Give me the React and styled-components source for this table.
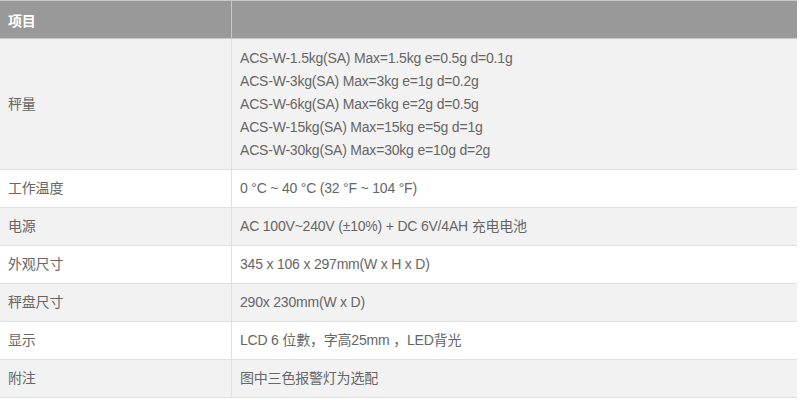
import React from "react";
import styled, { createGlobalStyle } from "styled-components";

const Global = createGlobalStyle`
  html, body { margin: 0; padding: 0; background: #fff; }
  body { font-family: "Liberation Sans", Arial, "Noto Sans CJK SC", sans-serif; }
`;

const Table = styled.table`
  width: 797px;
  border-collapse: collapse;
  font-size: 14px;
  letter-spacing: -0.2px;
  color: #666;
  border-top: 1px solid #c8c8c8;
`;

const HeadCell = styled.th`
  background: #999;
  color: #fff;
  font-weight: bold;
  text-align: left;
  height: 37px;
  padding: 0 8px;
  border-bottom: 1px solid #c8c8c8;
  border-right: 1px solid #c8c8c8;
  &:last-child { border-right: none; }
`;

const Row = styled.tr`
  background: ${(p) => (p.$alt ? "#f2f2f2" : "#fff")};
`;

const Cell = styled.td`
  padding: ${(p) => (p.$tall ? "8px 8px 7px" : "7px 8px")};
  line-height: 23px;
  border-bottom: 1px solid #e0e0e0;
  border-right: 1px solid #e0e0e0;
  vertical-align: middle;
  width: ${(p) => (p.$first ? "215px" : "auto")};
  &:last-child { border-right: none; }
`;

const Line = styled.div``;

const rows = [
  ["秤量", [
    "ACS-W-1.5kg(SA) Max=1.5kg e=0.5g d=0.1g",
    "ACS-W-3kg(SA) Max=3kg e=1g d=0.2g",
    "ACS-W-6kg(SA) Max=6kg e=2g d=0.5g",
    "ACS-W-15kg(SA) Max=15kg e=5g d=1g",
    "ACS-W-30kg(SA) Max=30kg e=10g d=2g",
  ]],
  ["工作温度", ["0 °C ~ 40 °C (32 °F ~ 104 °F)"]],
  ["电源", ["AC 100V~240V (±10%) + DC 6V/4AH 充电电池"]],
  ["外观尺寸", ["345 x 106 x 297mm(W x H x D)"]],
  ["秤盘尺寸", ["290x 230mm(W x D)"]],
  ["显示", ["LCD 6 位數，字高25mm ，LED背光"]],
  ["附注", ["图中三色报警灯为选配"]],
];

export default function App() {
  return (
    <>
      <Global />
      <Table>
        <thead>
          <tr>
            <HeadCell>项目</HeadCell>
            <HeadCell></HeadCell>
          </tr>
        </thead>
        <tbody>
          {rows.map(([k, v], i) => (
            <Row key={k} $alt={i % 2 === 0}>
              <Cell $first $tall={v.length > 1}>{k}</Cell>
              <Cell $tall={v.length > 1}>
                {v.map((l) => (
                  <Line key={l}>{l}</Line>
                ))}
              </Cell>
            </Row>
          ))}
        </tbody>
      </Table>
    </>
  );
}
